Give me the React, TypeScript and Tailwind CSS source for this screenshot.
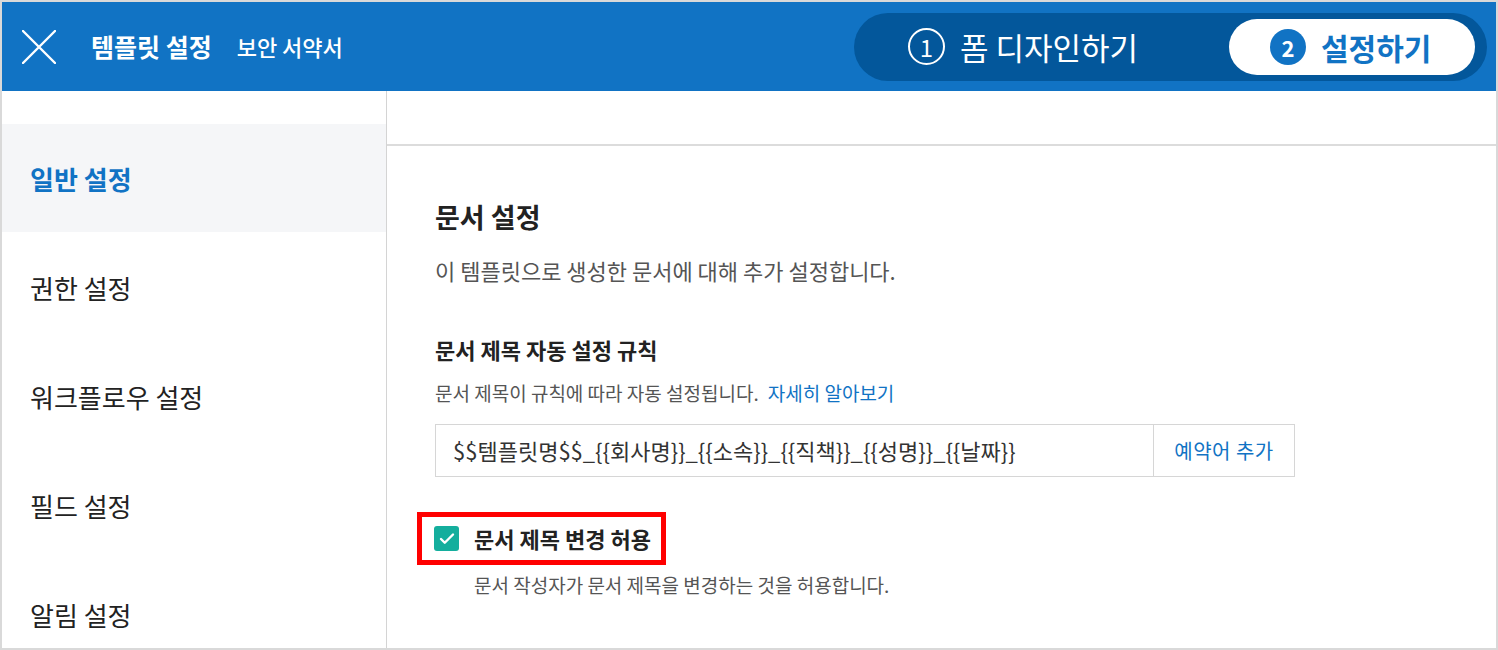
import { Check } from 'lucide-react';

const menu = ['일반 설정', '권한 설정', '워크플로우 설정', '필드 설정', '알림 설정'];

function CloseIcon() {
  return (
    <svg width="34" height="34" viewBox="0 0 34 34" fill="none">
      <path d="M1 1L33 33M33 1L1 33" stroke="white" strokeWidth="2.4" strokeLinecap="round" />
    </svg>
  );
}

export default function App() {
  return (
    <div className="w-[1498px] h-[650px] border-2 border-[#d9d9d9] bg-white flex flex-col overflow-hidden font-['Noto_Sans_CJK_KR','Noto_Sans',sans-serif] text-[#222]">
      <header className="h-[89px] shrink-0 bg-[#1173c4] flex items-center pl-[20px] pr-[9px]">
        <CloseIcon />
        <span className="ml-[35px] text-[25px] font-bold text-white">템플릿 설정</span>
        <span className="ml-[25px] text-[22px] font-medium text-white">보안 서약서</span>

        <div className="ml-auto h-[68px] w-[633px] rounded-full bg-[#03579b] flex items-center pl-[54px] pr-[12px]">
          <span className="w-[37px] h-[37px] rounded-full border-2 border-white flex items-center justify-center text-white text-[24px] leading-none">
            1
          </span>
          <span className="ml-[15px] text-[31px] text-white leading-none">폼 디자인하기</span>
          <div className="ml-auto h-[56px] w-[246px] rounded-full bg-white flex items-center pl-[41px]">
            <span className="w-[36px] h-[36px] rounded-full bg-[#1173c4] flex items-center justify-center text-white text-[22px] font-bold leading-none">
              2
            </span>
            <span className="ml-[15px] text-[30px] font-bold text-[#1173c4] leading-none">설정하기</span>
          </div>
        </div>
      </header>

      <div className="flex flex-1 min-h-0">
        <aside className="w-[385px] shrink-0 border-r border-[#d4d4d4] pt-[33px]">
          {menu.map((m, i) => (
            <div
              key={m}
              className={
                i === 0
                  ? 'h-[108px] mb-[1px] flex items-center pl-[28px] bg-[#f5f6f8] text-[26px] font-bold text-[#1173c4]'
                  : 'h-[109px] flex items-center pl-[28px] text-[26px] text-[#222]'
              }
            >
              {m}
            </div>
          ))}
        </aside>

        <main className="flex-1 flex flex-col">
          <div className="h-[55px] shrink-0 border-b-2 border-[#dcdcdc]" />
          <div className="pl-[48px] pt-[52px]">
            <h2 className="text-[27px] leading-[38px] font-bold text-[#222]">문서 설정</h2>
            <p className="mt-[18px] text-[22px] leading-[32px] text-[#555]">이 템플릿으로 생성한 문서에 대해 추가 설정합니다.</p>

            <h3 className="mt-[48px] text-[22px] leading-[30px] font-bold text-[#222]">문서 제목 자동 설정 규칙</h3>
            <p className="mt-[16px] text-[19px] leading-[26px] text-[#555]">
              문서 제목이 규칙에 따라 자동 설정됩니다.
              <span className="ml-[9px] text-[#1173c4]">자세히 알아보기</span>
            </p>

            <div className="mt-[18px] w-[860px] h-[53px] border border-[#d6d6d6] flex">
              <div className="flex-1 flex items-center pl-[17px] text-[22px] text-[#333]">
                {'$$템플릿명$$_{{회사명}}_{{소속}}_{{직책}}_{{성명}}_{{날짜}}'}
              </div>
              <div className="w-[141px] border-l border-[#d6d6d6] flex items-center justify-center text-[20px] text-[#1173c4] tracking-[0.5px]">
                예약어 추가
              </div>
            </div>

            <div className="mt-[35px] -ml-[18px] inline-flex items-center border-[5px] border-[#ff0000] pl-[12px] pr-[10px] py-[6px]">
              <span className="w-[25px] h-[25px] rounded-[3px] bg-[#14ae9d] flex items-center justify-center">
                <Check size={18} strokeWidth={3.2} color="white" />
              </span>
              <span className="ml-[15px] text-[22px] leading-[31px] font-bold text-[#222]">문서 제목 변경 허용</span>
            </div>

            <p className="mt-[7px] pl-[39px] text-[19px] leading-[26px] text-[#555]">
              문서 작성자가 문서 제목을 변경하는 것을 허용합니다.
            </p>
          </div>
        </main>
      </div>
    </div>
  );
}
